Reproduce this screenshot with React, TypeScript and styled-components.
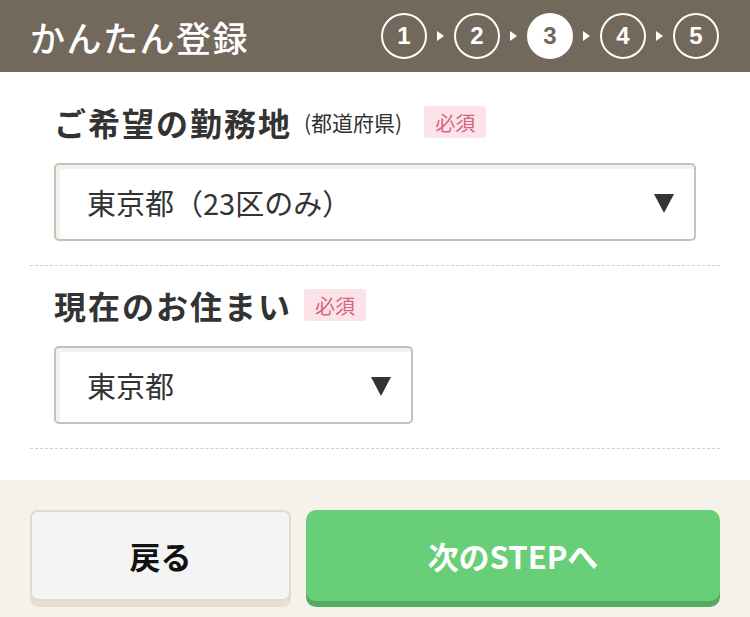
import styled, { createGlobalStyle } from 'styled-components';

const GlobalStyle = createGlobalStyle`
  html, body {
    margin: 0;
    padding: 0;
    background: #ffffff;
    font-family: 'Noto Sans CJK JP', 'Noto Sans', sans-serif;
    color: #333333;
  }
  * {
    box-sizing: border-box;
  }
`;

const StyledHeader = styled.header`
  display: flex;
  align-items: center;
  justify-content: space-between;
  height: 72px;
  padding: 0 31px 0 30px;
  background-color: #73685c;
`;

const StyledTitle = styled.h1`
  margin: 0;
  font-size: 35px;
  font-weight: 500;
  letter-spacing: 1.5px;
  color: #ffffff;
`;

const StyledSteps = styled.ol`
  display: flex;
  align-items: center;
  gap: 10px;
  margin: 0;
  padding: 0;
  list-style: none;
`;

const StyledStep = styled.li<{ $active?: boolean }>`
  display: flex;
  align-items: center;
  justify-content: center;
  width: 46px;
  height: 46px;
  border: 2px solid #ffffff;
  border-radius: 50%;
  font-family: 'Liberation Sans', Arial, sans-serif;
  font-size: 24px;
  font-weight: 700;
  color: ${({ $active }) => ($active ? '#73685c' : '#ffffff')};
  background-color: ${({ $active }) => ($active ? '#ffffff' : 'transparent')};
`;

const StyledArrow = styled.li`
  width: 0;
  height: 0;
  border-top: 5px solid transparent;
  border-bottom: 5px solid transparent;
  border-left: 7px solid #ffffff;
`;

const StyledMain = styled.main`
  padding: 11px 30px 31px;
`;

const StyledSection = styled.section`
  display: flex;
  flex-direction: column;
  gap: 23px;
  padding: 21px 24px 24px;
  border-bottom: 1px dashed #cfcfcf;
`;

const StyledLabelRow = styled.div`
  display: flex;
  align-items: center;
  height: 36px;
`;

const StyledLabel = styled.h2`
  margin: 0;
  font-size: 32px;
  font-weight: 700;
  letter-spacing: 2px;
  color: #333333;
`;

const StyledNote = styled.span`
  margin-left: 12px;
  font-size: 21px;
  font-weight: 400;
  color: #333333;
`;

const StyledBadge = styled.span<{ $gap: number }>`
  display: inline-flex;
  align-items: center;
  height: 32px;
  margin-left: ${({ $gap }) => $gap}px;
  padding: 0 11px;
  border-radius: 3px;
  background-color: #fbe3e9;
  font-size: 20px;
  color: #d7657f;
`;

const StyledSelect = styled.div<{ $width: string }>`
  display: flex;
  align-items: center;
  justify-content: space-between;
  width: ${({ $width }) => $width};
  height: 78px;
  padding: 0 20px 0 31px;
  border: 2px solid #c7c2b8;
  border-radius: 5px;
  background-color: #ffffff;
  box-shadow: inset 4px 4px 0 #f4f2ee;
  font-size: 29px;
  color: #333333;
`;

const StyledCaret = styled.span`
  width: 0;
  height: 0;
  margin-top: 2px;
  border-left: 10px solid transparent;
  border-right: 10px solid transparent;
  border-top: 19px solid #333333;
`;

const StyledFooter = styled.footer`
  display: grid;
  grid-template-columns: 261px 1fr;
  gap: 15px;
  padding: 30px 30px 30px;
  background-color: #f5f2ec;
`;

const StyledButton = styled.button<{ $primary?: boolean }>`
  display: flex;
  align-items: center;
  justify-content: center;
  height: 91px;
  padding: 0;
  border: ${({ $primary }) => ($primary ? 'none' : '2px solid #e2dacb')};
  border-radius: ${({ $primary }) => ($primary ? '10px' : '8px')};
  background-color: ${({ $primary }) => ($primary ? '#68cf78' : '#f4f4f4')};
  box-shadow: 0 6px 0 ${({ $primary }) => ($primary ? '#56aa5d' : '#e7dfd1')};
  font-family: 'Noto Sans CJK JP', 'Noto Sans', sans-serif;
  font-size: 31px;
  font-weight: 700;
  color: ${({ $primary }) => ($primary ? '#ffffff' : '#111111')};
`;

const steps = [1, 2, 3, 4, 5];

export default function App() {
  return (
    <>
      <GlobalStyle />
      <StyledHeader>
        <StyledTitle>かんたん登録</StyledTitle>
        <StyledSteps>
          {steps.map((step, index) => [
            index > 0 && <StyledArrow key={`a${step}`} />,
            <StyledStep key={step} $active={step === 3}>
              {step}
            </StyledStep>,
          ])}
        </StyledSteps>
      </StyledHeader>
      <StyledMain>
        <StyledSection>
          <StyledLabelRow>
            <StyledLabel>ご希望の勤務地</StyledLabel>
            <StyledNote>(都道府県)</StyledNote>
            <StyledBadge $gap={22}>必須</StyledBadge>
          </StyledLabelRow>
          <StyledSelect $width='100%'>
            東京都（23区のみ）
            <StyledCaret />
          </StyledSelect>
        </StyledSection>
        <StyledSection>
          <StyledLabelRow>
            <StyledLabel>現在のお住まい</StyledLabel>
            <StyledBadge $gap={12}>必須</StyledBadge>
          </StyledLabelRow>
          <StyledSelect $width='359px'>
            東京都
            <StyledCaret />
          </StyledSelect>
        </StyledSection>
      </StyledMain>
      <StyledFooter>
        <StyledButton>戻る</StyledButton>
        <StyledButton $primary>次のSTEPへ</StyledButton>
      </StyledFooter>
    </>
  );
}
